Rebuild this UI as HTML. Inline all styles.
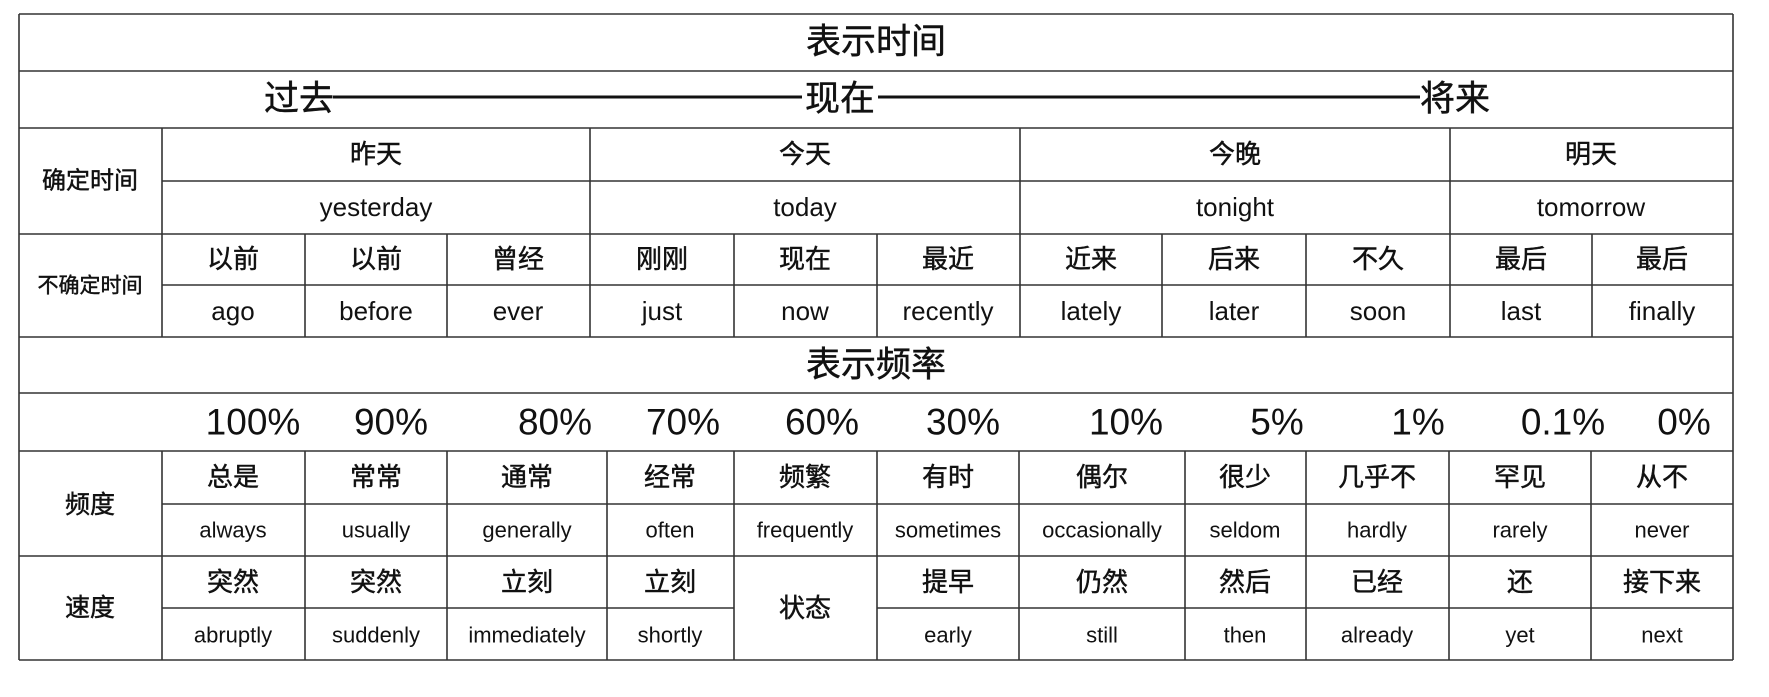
<!DOCTYPE html>
<html><head><meta charset="utf-8"><style>
html,body{margin:0;padding:0;background:#fff;}
svg{display:block}
text{font-family:"Liberation Sans","Noto Sans CJK SC",sans-serif;fill:#111;text-anchor:middle;dominant-baseline:central}
.c text, text.c{stroke:#111;stroke-width:0.45}
.l{stroke:#333;stroke-width:1.6}
</style></head><body>
<svg width="1769" height="697" viewBox="0 0 1769 697" xmlns="http://www.w3.org/2000/svg">
<rect width="1769" height="697" fill="#fff"/>
<g class="l">
<line x1="19" y1="14" x2="1733" y2="14"/>
<line x1="19" y1="71" x2="1733" y2="71"/>
<line x1="19" y1="128" x2="1733" y2="128"/>
<line x1="162" y1="181" x2="1733" y2="181"/>
<line x1="19" y1="234" x2="1733" y2="234"/>
<line x1="162" y1="285" x2="1733" y2="285"/>
<line x1="19" y1="337" x2="1733" y2="337"/>
<line x1="19" y1="393" x2="1733" y2="393"/>
<line x1="19" y1="451" x2="1733" y2="451"/>
<line x1="162" y1="504" x2="1733" y2="504"/>
<line x1="19" y1="556" x2="1733" y2="556"/>
<line x1="162" y1="608" x2="734" y2="608"/>
<line x1="877" y1="608" x2="1733" y2="608"/>
<line x1="19" y1="660" x2="1733" y2="660"/>
<line x1="19" y1="14" x2="19" y2="660"/>
<line x1="1733" y1="14" x2="1733" y2="660"/>
<line x1="162" y1="128" x2="162" y2="337"/>
<line x1="162" y1="451" x2="162" y2="660"/>
<line x1="590" y1="128" x2="590" y2="234"/>
<line x1="1020" y1="128" x2="1020" y2="234"/>
<line x1="1450" y1="128" x2="1450" y2="234"/>
<line x1="305" y1="234" x2="305" y2="337"/>
<line x1="447" y1="234" x2="447" y2="337"/>
<line x1="590" y1="234" x2="590" y2="337"/>
<line x1="734" y1="234" x2="734" y2="337"/>
<line x1="877" y1="234" x2="877" y2="337"/>
<line x1="1020" y1="234" x2="1020" y2="337"/>
<line x1="1162" y1="234" x2="1162" y2="337"/>
<line x1="1306" y1="234" x2="1306" y2="337"/>
<line x1="1450" y1="234" x2="1450" y2="337"/>
<line x1="1592" y1="234" x2="1592" y2="337"/>
<line x1="305" y1="451" x2="305" y2="660"/>
<line x1="447" y1="451" x2="447" y2="660"/>
<line x1="607" y1="451" x2="607" y2="660"/>
<line x1="734" y1="451" x2="734" y2="660"/>
<line x1="877" y1="451" x2="877" y2="660"/>
<line x1="1019" y1="451" x2="1019" y2="660"/>
<line x1="1185" y1="451" x2="1185" y2="660"/>
<line x1="1306" y1="451" x2="1306" y2="660"/>
<line x1="1449" y1="451" x2="1449" y2="660"/>
<line x1="1591" y1="451" x2="1591" y2="660"/>
</g>
<line x1="333" y1="97" x2="1420" y2="97" stroke="#111" stroke-width="3"/>
<g font-size="35" class="c">
<text x="876" y="42">表示时间</text>
<rect x="802" y="78" width="76" height="40" fill="#fff" stroke="none"/>
<text x="299" y="99">过去</text>
<text x="840" y="99">现在</text>
<text x="1455" y="99">将来</text>
<text x="876" y="365">表示频率</text>
</g>
<g font-size="24" class="c">
<text x="90" y="181">确定时间</text>
<text x="90" y="505" font-size="25">频度</text>
<text x="90" y="608" font-size="25">速度</text>
<text x="90" y="286" font-size="21">不确定时间</text>
</g>
<g font-size="26" class="c">
<text x="376" y="154">昨天</text>
<text x="805" y="154">今天</text>
<text x="1235" y="154">今晚</text>
<text x="1591" y="154">明天</text>
<text x="233" y="259">以前</text><text x="376" y="259">以前</text><text x="518" y="259">曾经</text>
<text x="662" y="259">刚刚</text><text x="805" y="259">现在</text><text x="948" y="259">最近</text>
<text x="1091" y="259">近来</text><text x="1234" y="259">后来</text><text x="1378" y="259">不久</text>
<text x="1521" y="259">最后</text><text x="1662" y="259">最后</text>
<text x="233" y="477">总是</text><text x="376" y="477">常常</text><text x="527" y="477">通常</text>
<text x="670" y="477">经常</text><text x="805" y="477">频繁</text><text x="948" y="477">有时</text>
<text x="1102" y="477">偶尔</text><text x="1245" y="477">很少</text><text x="1377" y="477">几乎不</text>
<text x="1520" y="477">罕见</text><text x="1662" y="477">从不</text>
<text x="233" y="582">突然</text><text x="376" y="582">突然</text><text x="527" y="582">立刻</text>
<text x="670" y="582">立刻</text><text x="805" y="608">状态</text><text x="948" y="582">提早</text>
<text x="1102" y="582">仍然</text><text x="1245" y="582">然后</text><text x="1377" y="582">已经</text>
<text x="1520" y="582">还</text><text x="1662" y="582">接下来</text>
</g>
<g font-size="26">
<text x="376" y="207">yesterday</text>
<text x="805" y="207">today</text>
<text x="1235" y="207">tonight</text>
<text x="1591" y="207">tomorrow</text>
<text x="233" y="311">ago</text><text x="376" y="311">before</text><text x="518" y="311">ever</text>
<text x="662" y="311">just</text><text x="805" y="311">now</text><text x="948" y="311">recently</text>
<text x="1091" y="311">lately</text><text x="1234" y="311">later</text><text x="1378" y="311">soon</text>
<text x="1521" y="311">last</text><text x="1662" y="311">finally</text>
</g>
<g font-size="37">
<text x="253" y="422">100%</text><text x="391" y="422">90%</text><text x="555" y="422">80%</text>
<text x="683" y="422">70%</text><text x="822" y="422">60%</text><text x="963" y="422">30%</text>
<text x="1126" y="422">10%</text><text x="1277" y="422">5%</text><text x="1418" y="422">1%</text>
<text x="1563" y="422">0.1%</text><text x="1684" y="422">0%</text>
</g>
<g font-size="22">
<text x="233" y="530">always</text><text x="376" y="530">usually</text><text x="527" y="530">generally</text>
<text x="670" y="530">often</text><text x="805" y="530">frequently</text><text x="948" y="530">sometimes</text>
<text x="1102" y="530">occasionally</text><text x="1245" y="530">seldom</text><text x="1377" y="530">hardly</text>
<text x="1520" y="530">rarely</text><text x="1662" y="530">never</text>
<text x="233" y="635">abruptly</text><text x="376" y="635">suddenly</text><text x="527" y="635">immediately</text>
<text x="670" y="635">shortly</text><text x="948" y="635">early</text>
<text x="1102" y="635">still</text><text x="1245" y="635">then</text><text x="1377" y="635">already</text>
<text x="1520" y="635">yet</text><text x="1662" y="635">next</text>
</g>
</svg>
</body></html>
